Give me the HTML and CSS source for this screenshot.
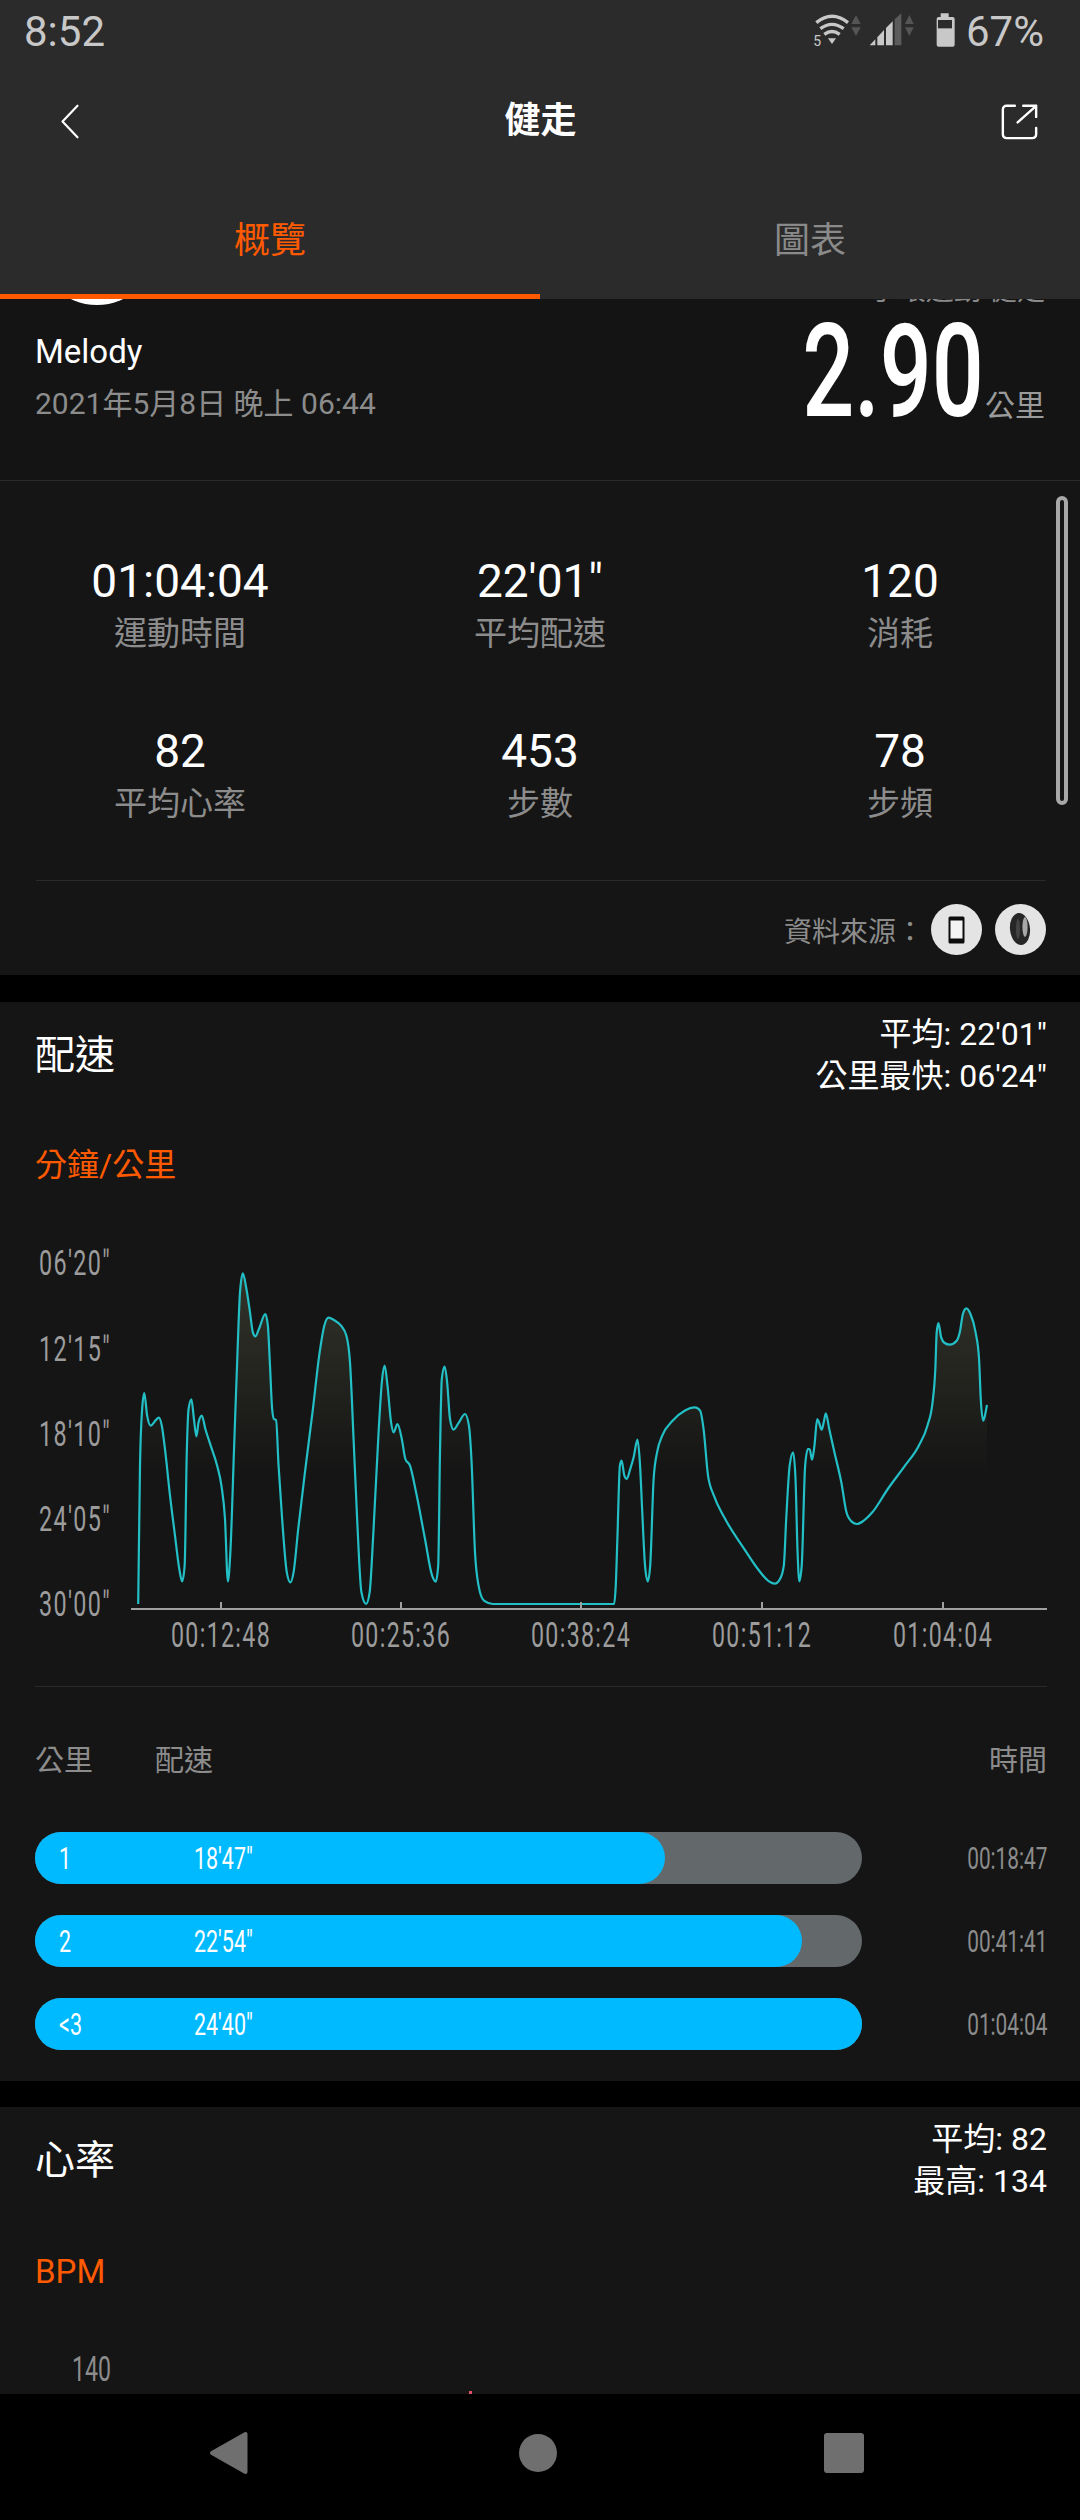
FILE: index.html
```html
<!DOCTYPE html>
<html lang="zh-Hant">
<head>
<meta charset="utf-8">
<title>健走</title>
<link rel="stylesheet" href="styles.css">
</head>
<body>
<div class="app">
  <header class="header">
    <div class="status">
      <span class="status-time">8:52</span>
      <div class="status-right">
        <svg class="status-icons" viewBox="160 36 430 120" aria-hidden="true">
          <g fill="none" stroke="#c8c8c8" stroke-width="10">
            <path d="M170 68 Q217 30 265 68"/>
            <path d="M182 86 Q217 60 252 86"/>
            <path d="M194 103 Q217 86 240 103"/>
          </g>
          <polygon points="205,115 229,115 217,132" fill="#c8c8c8"/>
          <text x="161" y="139" class="wifi-five">5</text>
          <polygon points="289,45 303,72 275,72" fill="#555"/>
          <polygon points="275,82 303,82 289,108" fill="#555"/>
          <polygon points="330,136 347,118 347,136" fill="#c8c8c8"/>
          <polygon points="353,112 373,90 373,136 353,136" fill="#c8c8c8"/>
          <polygon points="379,84 399,64 399,136 379,136" fill="#c8c8c8"/>
          <polygon points="405,58 425,40 425,136 405,136" fill="#5c5c5c"/>
          <polygon points="449,45 462,72 436,72" fill="#555"/>
          <polygon points="436,82 462,82 449,108" fill="#555"/>
          <path d="M543 40h24v11h12a6 6 0 0 1 6 6v77a6 6 0 0 1-6 6h-42a6 6 0 0 1-6-6V57a6 6 0 0 1 6-6h6z" fill="#c8c8c8"/>
          <rect x="535" y="60" width="42" height="25" fill="#2b2b2b"/>
        </svg>
        <span class="status-battery">67%</span>
      </div>
    </div>
    <div class="toolbar">
      <svg class="tool-icon" viewBox="0 0 24 42" aria-hidden="true"><path d="M21 2 L3 21 L21 40"/></svg>
      <h1 class="toolbar-title">健走</h1>
      <svg class="tool-icon share" viewBox="0 0 40 40" aria-hidden="true">
        <path d="M15 3H6a4 4 0 0 0-4 4v27a4 4 0 0 0 4 4h28a4 4 0 0 0 4-4V27"/>
        <path d="M38 3 18 21M24 3h14v12"/>
      </svg>
    </div>
    <nav class="tabs">
      <div class="tab tab-active">概覽</div>
      <div class="tab">圖表</div>
    </nav>
  </header>

  <main class="scroll">
    <section class="summary">
      <div class="avatar"></div>
      <div class="device-line">手環運動·健走</div>
      <div class="summary-left">
        <div class="user-name">Melody</div>
        <div class="user-date">2021年5月8日 晚上 06:44</div>
      </div>
      <div class="summary-right">
        <span class="distance">2.90</span><span class="distance-unit">公里</span>
      </div>
    </section>

    <section class="overview">
      <div class="scrollbar"></div>
      <div class="stats">
        <div class="stat"><div class="stat-value">01:04:04</div><div class="stat-label">運動時間</div></div>
        <div class="stat"><div class="stat-value">22'01"</div><div class="stat-label">平均配速</div></div>
        <div class="stat"><div class="stat-value">120</div><div class="stat-label">消耗</div></div>
        <div class="stat"><div class="stat-value">82</div><div class="stat-label">平均心率</div></div>
        <div class="stat"><div class="stat-value">453</div><div class="stat-label">步數</div></div>
        <div class="stat"><div class="stat-value">78</div><div class="stat-label">步頻</div></div>
      </div>
      <div class="source">
        <span class="source-label">資料來源：</span>
        <svg class="source-icon" viewBox="0 0 51 51" aria-hidden="true">
          <circle cx="25.5" cy="25.5" r="25.5" fill="#e4e4e4"/>
          <rect x="17.5" y="12.5" width="16" height="27" rx="1.5" fill="#0c0c0c"/>
          <rect x="19.5" y="16.5" width="12" height="18" fill="#f4f4f4"/>
        </svg>
        <svg class="source-icon" viewBox="0 0 51 51" aria-hidden="true">
          <circle cx="25.5" cy="25.5" r="25.5" fill="#e4e4e4"/>
          <ellipse cx="25" cy="25" rx="10" ry="16" fill="#262626" transform="rotate(-6 25 25)"/>
          <ellipse cx="30" cy="23" rx="2.6" ry="10" fill="#a8a8a8"/>
          <ellipse cx="23" cy="25" rx="2" ry="10" fill="#444"/>
        </svg>
      </div>
    </section>

    <section class="card card-pace">
      <div class="card-head">
        <h2 class="card-title">配速</h2>
        <div class="card-meta">
          <div>平均: 22'01"</div>
          <div>公里最快: 06'24"</div>
        </div>
      </div>
      <div class="unit">分鐘/公里</div>
      <svg class="pace-chart" viewBox="0 1220 1080 440" aria-label="配速圖表">
        <defs>
          <linearGradient id="paceFill" gradientUnits="userSpaceOnUse" x1="0" y1="1260" x2="0" y2="1473">
            <stop offset="0" stop-color="#34362a" stop-opacity="1"/>
            <stop offset="1" stop-color="#34362a" stop-opacity="0"/>
          </linearGradient>
        </defs>
        <g class="y-labels">
          <text x="39" y="1276" textLength="72" lengthAdjust="spacingAndGlyphs">06'20"</text>
          <text x="39" y="1362" textLength="72" lengthAdjust="spacingAndGlyphs">12'15"</text>
          <text x="39" y="1447" textLength="72" lengthAdjust="spacingAndGlyphs">18'10"</text>
          <text x="39" y="1532" textLength="72" lengthAdjust="spacingAndGlyphs">24'05"</text>
          <text x="39" y="1617" textLength="72" lengthAdjust="spacingAndGlyphs">30'00"</text>
        </g>
        <path id="pace-area" class="curve-fill"/>
        <path id="pace-line" class="curve"/>
        <g class="axis">
          <path d="M131 1610H1047M221 1603v7M401 1603v7M581 1603v7M762 1603v7M943 1603v7"/>
        </g>
        <g class="x-labels">
          <text x="221" y="1648" textLength="100" lengthAdjust="spacingAndGlyphs">00:12:48</text>
          <text x="401" y="1648" textLength="100" lengthAdjust="spacingAndGlyphs">00:25:36</text>
          <text x="581" y="1648" textLength="100" lengthAdjust="spacingAndGlyphs">00:38:24</text>
          <text x="762" y="1648" textLength="100" lengthAdjust="spacingAndGlyphs">00:51:12</text>
          <text x="943" y="1648" textLength="100" lengthAdjust="spacingAndGlyphs">01:04:04</text>
        </g>
      </svg>
      <div class="rule"></div>
      <div class="table-head">
        <span class="th-km">公里</span>
        <span class="th-pace">配速</span>
        <span class="th-time">時間</span>
      </div>
      <div class="splits">
        <div class="split">
          <div class="track">
            <div class="fill" style="width:76.2%"></div>
            <span class="km"><span class="narrow">1</span></span>
            <span class="pace"><span class="narrow">18'47"</span></span>
          </div>
          <span class="split-time"><span class="narrow-time">00:18:47</span></span>
        </div>
        <div class="split">
          <div class="track">
            <div class="fill" style="width:92.7%"></div>
            <span class="km"><span class="narrow">2</span></span>
            <span class="pace"><span class="narrow">22'54"</span></span>
          </div>
          <span class="split-time"><span class="narrow-time">00:41:41</span></span>
        </div>
        <div class="split">
          <div class="track">
            <div class="fill" style="width:100%"></div>
            <span class="km"><span class="narrow">&lt;3</span></span>
            <span class="pace"><span class="narrow">24'40"</span></span>
          </div>
          <span class="split-time"><span class="narrow-time">01:04:04</span></span>
        </div>
      </div>
    </section>

    <section class="card card-heart">
      <div class="card-head">
        <h2 class="card-title">心率</h2>
        <div class="card-meta">
          <div>平均: 82</div>
          <div>最高: 134</div>
        </div>
      </div>
      <div class="unit unit-bpm">BPM</div>
      <div class="bpm-tick"><span class="bpm-tick-text">140</span></div>
      <div class="heart-peak"></div>
    </section>
  </main>

  <footer class="navbar">
    <svg class="navbar-icons" viewBox="0 0 1080 126" aria-hidden="true">
      <polygon points="212,59 245.5,40 245.5,78" class="nav-tri"/>
      <circle cx="538" cy="59" r="19" fill="#6f6f6f"/>
      <rect x="824" y="39" width="40" height="40" rx="3" fill="#6f6f6f"/>
    </svg>
  </footer>
</div>
<script src="chart.js"></script>
</body>
</html>
```
FILE: styles.css
```css
* { box-sizing: border-box; }

html, body {
  margin: 0;
  padding: 0;
  background: #000;
}

body {
  font-family: Roboto, "Noto Sans CJK TC", sans-serif;
  color: #fff;
}

.app {
  width: 1080px;
  height: 2520px;
  display: flex;
  flex-direction: column;
  overflow: hidden;
  background: #000;
}

/* Header */
.header {
  height: 299px;
  flex: none;
  background: #2b2b2b;
  display: flex;
  flex-direction: column;
  position: relative;
  z-index: 1;
}

.status {
  height: 64px;
  display: flex;
  align-items: center;
  justify-content: space-between;
  padding: 0 36px 0 24px;
  color: #c8c8c8;
  font-size: 42px;
  line-height: 64px;
}

.status-right {
  display: flex;
  align-items: center;
  gap: 10px;
}

.status-icons {
  width: 143.33px;
  height: 40px;
  display: block;
}

.wifi-five {
  font-size: 42px;
  fill: #c8c8c8;
}

.toolbar {
  height: 114px;
  display: flex;
  align-items: center;
  justify-content: space-between;
  padding: 0 42px 0 60px;
}

.tool-icon {
  width: 20px;
  height: 39px;
  display: block;
  fill: none;
  stroke: #fff;
  stroke-width: 2.6;
  stroke-linecap: round;
  stroke-linejoin: round;
  overflow: visible;
}

.share {
  width: 37px;
  height: 37px;
}

.toolbar-title {
  margin: 0;
  font-size: 36px;
  font-weight: 700;
  line-height: 48px;
}

.tabs {
  flex: 1;
  display: flex;
}

.tab {
  flex: 1;
  height: 100%;
  display: flex;
  align-items: center;
  justify-content: center;
  padding-top: 2px;
  font-size: 36px;
  color: #8a8a8a;
  border-bottom: 5px solid transparent;
}

.tab-active {
  color: #ff5a00;
  border-bottom-color: #ff5a00;
}

/* Scrolling content */
.scroll {
  flex: 1;
  overflow: hidden;
  min-height: 0;
  background: #000;
}

.summary {
  height: 182px;
  position: relative;
  background: #141414;
  border-bottom: 1px solid #2a2a2a;
  display: flex;
  justify-content: space-between;
  padding: 0 35px;
}

.avatar {
  position: absolute;
  left: 37px;
  top: -114px;
  width: 120px;
  height: 120px;
  border-radius: 50%;
  background: #fff;
}

.device-line {
  position: absolute;
  right: 35px;
  top: -25px;
  font-size: 28px;
  line-height: 34px;
  color: #8a8a8a;
}

.summary-left {
  padding-top: 30px;
}

.user-name {
  font-size: 33px;
  line-height: 46px;
}

.user-date {
  margin-top: 6px;
  font-size: 30px;
  line-height: 46px;
  color: #8c8c8c;
}

.summary-right {
  display: flex;
  align-items: flex-end;
  height: 124px;
}

.distance {
  display: inline-block;
  font-size: 129px;
  font-weight: 500;
  line-height: 92px;
  margin-bottom: 5.5px;
  transform: scaleX(0.71);
  transform-origin: right bottom;
}

.distance-unit {
  font-size: 30px;
  line-height: 34px;
  margin-left: 1px;
  color: #9a9a9a;
}

/* Stats */
.overview {
  height: 494px;
  position: relative;
  background: #151515;
  padding: 72px 36px 0;
  margin-bottom: 27px;
}

.scrollbar {
  position: absolute;
  left: 1056px;
  top: 15px;
  width: 12px;
  height: 309px;
  border-radius: 6px;
  border: 4px solid #a8a8a8;
  background: #151515;
}

.stats {
  margin: 0 -36px;
  display: grid;
  grid-template-columns: repeat(3, 1fr);
  row-gap: 65px;
  padding-bottom: 52px;
}

.stat {
  text-align: center;
}

.stat-value {
  font-size: 46px;
  line-height: 56px;
}

.stat-label {
  margin-top: 1px;
  font-size: 33px;
  line-height: 48px;
  color: #8c8c8c;
}

.source {
  height: 95px;
  padding-top: 3px;
  border-top: 1px solid #2a2a2a;
  display: flex;
  align-items: center;
  justify-content: flex-end;
  gap: 13px;
  margin-right: -2px;
}

.source-label {
  font-size: 28px;
  color: #8c8c8c;
  margin-right: -6px;
}

.source-icon {
  width: 51px;
  height: 51px;
  display: block;
}

/* Cards */
.card {
  background: #151515;
  padding: 11px 33px 0 35px;
}

.card-pace {
  height: 1079px;
  margin-bottom: 26px;
}

.card-head {
  display: flex;
  align-items: center;
  justify-content: space-between;
}

.card-title {
  margin: 2px 0 0;
  font-size: 40px;
  font-weight: 400;
  line-height: 56px;
}

.card-meta {
  text-align: right;
  font-size: 32px;
  line-height: 42px;
}

.unit {
  margin-top: 46px;
  font-size: 32px;
  line-height: 44px;
  color: #ff5a00;
}

.pace-chart {
  display: block;
  width: 1080px;
  height: 440px;
  margin: 32px 0 0 -35px;
}

.y-labels text,
.x-labels text {
  font-size: 35px;
  letter-spacing: 2px;
  fill: #9c9c9c;
}

.x-labels text {
  text-anchor: middle;
}

.curve {
  fill: none;
  stroke: #22bfc6;
  stroke-width: 2.2;
  stroke-linejoin: round;
}

.curve-fill {
  fill: url(#paceFill);
}

.axis path {
  fill: none;
  stroke: #a0a0a0;
  stroke-width: 2;
}

.rule {
  height: 1px;
  margin-top: 27px;
  background: #2a2a2a;
}

.table-head {
  display: flex;
  margin-top: 52px;
  font-size: 29px;
  line-height: 44px;
  color: #8c8c8c;
}

.th-km {
  width: 120px;
}

.th-pace {
  flex: 1;
}

.splits {
  margin-top: 49px;
  display: flex;
  flex-direction: column;
  gap: 31px;
}

.split {
  display: flex;
  align-items: center;
  justify-content: space-between;
}

.track {
  width: 827px;
  height: 52px;
  border-radius: 26px;
  background: #63686b;
  position: relative;
  display: flex;
  align-items: center;
  font-size: 32px;
}

.fill {
  position: absolute;
  left: 0;
  top: 0;
  bottom: 0;
  border-radius: 26px;
  background: #00baff;
}

.km {
  position: relative;
  width: 159px;
  padding-left: 24px;
  line-height: 52px;
}

.pace {
  position: relative;
  line-height: 52px;
}

.narrow {
  display: inline-block;
  transform: scaleX(0.67);
  transform-origin: left center;
}

.split-time {
  font-size: 32px;
  color: #8c8c8c;
}

.narrow-time {
  display: inline-block;
  transform: scaleX(0.65);
  transform-origin: right center;
}

.card-heart {
  height: 300px;
  position: relative;
}

.unit-bpm {
  margin-top: 48px;
  font-size: 33px;
}

.bpm-tick {
  margin-top: 54px;
  width: 76px;
  text-align: right;
  font-size: 35px;
  line-height: 44px;
  color: #8c8c8c;
}

.bpm-tick-text {
  display: inline-block;
  transform: scaleX(0.66);
  transform-origin: right center;
}

.heart-peak {
  position: absolute;
  left: 469px;
  top: 284px;
  width: 3px;
  height: 4px;
  background: #e0506a;
}

/* Navigation bar */
.navbar {
  height: 126px;
  flex: none;
  background: #000;
}

.navbar-icons {
  display: block;
  width: 1080px;
  height: 126px;
}

.nav-tri {
  fill: #6f6f6f;
  stroke: #6f6f6f;
  stroke-width: 4;
  stroke-linejoin: round;
}
```
FILE: chart.js
```js
// Pace samples, read off the two halves of the chart, drawn as a monotone cubic.
var left = [[387,1155],[392,740],[398,570],[404,522],[412,590],[422,620],[435,605],[445,596],[453,620],[463,700],[475,820],[490,950],[502,1050],[510,1087],[517,1040],[523,700],[528,570],[536,541],[543,600],[550,652],[556,610],[565,590],[575,630],[590,680],[608,740],[620,800],[630,900],[638,1087],[645,1000],[655,700],[665,400],[672,220],[680,163],[690,210],[700,280],[708,340],[715,352],[725,330],[743,285],[750,320],[756,440],[762,570],[767,600],[773,603],[780,740],[790,900],[803,1060],[813,1090],[822,1060],[835,930],[855,750],[875,580],[895,400],[908,320],[920,296],[935,303],[955,320],[970,350],[980,430],[990,660],[1000,900],[1012,1120],[1025,1155],[1035,1120],[1045,950],[1060,640],[1070,480],[1077,440],[1085,500],[1095,610],[1102,640],[1113,615],[1125,660],[1135,720],[1148,740],[1165,820],[1190,960],[1210,1070],[1220,1088],[1227,1040],[1232,700],[1237,480],[1245,443],[1252,490],[1260,600],[1270,632],[1285,610],[1302,585],[1313,620],[1320,720],[1330,1000],[1340,1100],[1355,1145],[1380,1155]];
var right = [[215,1155],[220,1100],[225,950],[232,740],[237,725],[245,770],[252,780],[262,750],[272,715],[283,662],[290,730],[297,880],[305,1040],[313,1087],[320,1040],[330,780],[340,700],[355,650],[385,605],[420,575],[450,565],[465,575],[475,630],[488,770],[505,830],[535,895],[590,985],[640,1060],[665,1087],[682,1094],[697,1080],[708,1040],[715,900],[725,740],[735,700],[742,780],[748,1000],[753,1087],[760,1040],[770,740],[778,690],[783,690],[790,722],[797,680],[805,600],[810,610],[818,632],[824,610],[830,583],[840,630],[855,700],[875,790],[890,880],[905,908],[920,915],[940,905],[965,880],[1010,810],[1060,740],[1100,680],[1125,620],[1140,550],[1148,450],[1152,340],[1157,312],[1165,355],[1175,372],[1190,377],[1210,365],[1220,335],[1228,285],[1238,268],[1250,285],[1265,340],[1275,420],[1280,540],[1287,605],[1292,590],[1298,558]];

var points = left.map(function (p) {
  return [p[0] / 2.8, 1220 + p[1] / 3];
}).concat(right.map(function (p) {
  return [540 + p[0] / 2.904, 1220 + p[1] / 3];
}));

function sign(v) { return v < 0 ? -1 : 1; }

function monotonePath(pts) {
  var n = pts.length, slopes = [], tangents = [], i;
  for (i = 0; i < n - 1; i++) {
    slopes[i] = (pts[i + 1][1] - pts[i][1]) / (pts[i + 1][0] - pts[i][0]);
  }
  tangents[0] = slopes[0];
  tangents[n - 1] = slopes[n - 2];
  for (i = 1; i < n - 1; i++) {
    var h0 = pts[i][0] - pts[i - 1][0];
    var h1 = pts[i + 1][0] - pts[i][0];
    var p = (slopes[i - 1] * h1 + slopes[i] * h0) / (h0 + h1);
    tangents[i] = (sign(slopes[i - 1]) + sign(slopes[i])) *
      Math.min(Math.abs(slopes[i - 1]), Math.abs(slopes[i]), 0.5 * Math.abs(p)) || 0;
  }
  var d = 'M' + pts[0][0].toFixed(2) + ' ' + pts[0][1].toFixed(2);
  for (i = 0; i < n - 1; i++) {
    var dx = (pts[i + 1][0] - pts[i][0]) / 3;
    d += 'C' + (pts[i][0] + dx).toFixed(2) + ' ' + (pts[i][1] + dx * tangents[i]).toFixed(2) +
      ' ' + (pts[i + 1][0] - dx).toFixed(2) + ' ' + (pts[i + 1][1] - dx * tangents[i + 1]).toFixed(2) +
      ' ' + pts[i + 1][0].toFixed(2) + ' ' + pts[i + 1][1].toFixed(2);
  }
  return d;
}

var line = monotonePath(points);
var last = points[points.length - 1];
document.getElementById('pace-line').setAttribute('d', line);
document.getElementById('pace-area').setAttribute('d',
  line + 'L' + last[0].toFixed(2) + ' 1605Z');
```
